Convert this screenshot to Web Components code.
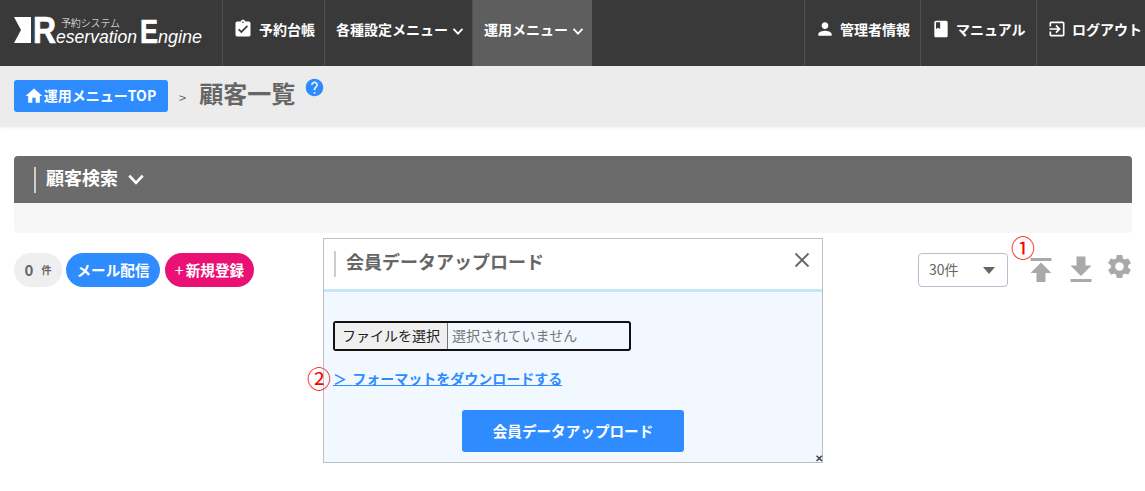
<!DOCTYPE html>
<html lang="ja">
<head>
<meta charset="utf-8">
<title>顧客一覧</title>
<style>
  html, body { margin: 0; padding: 0; background: #fff; }
  body { font-family: "Noto Sans CJK JP", "Noto Sans", sans-serif; color: #555; position: relative; height: 491px; overflow: hidden; }
</style>
</head>
<body>
<re-header>
  <re-nav-item icon="task" style="--w:102px;--gap:6px">予約台帳</re-nav-item>
  <re-nav-item caret style="--w:148px">各種設定メニュー</re-nav-item>
  <re-nav-item caret active style="--w:120px">運用メニュー</re-nav-item>
  <re-nav-item slot="right" icon="person" style="--w:116px">管理者情報</re-nav-item>
  <re-nav-item slot="right" icon="book" style="--w:116px;--gap:5px">マニュアル</re-nav-item>
  <re-nav-item slot="right" icon="logout" style="--w:109px">ログアウト</re-nav-item>
</re-header>
<re-subheader title-text="顧客一覧">運用メニューTOP</re-subheader>
<re-search-panel>顧客検索</re-search-panel>
<re-toolbar></re-toolbar>
<re-upload-modal></re-upload-modal>

<script>
const ICONS = {
  task: 'M19 3h-4.18C14.4 1.84 13.3 1 12 1c-1.3 0-2.4.84-2.82 2H5c-1.1 0-2 .9-2 2v14c0 1.1.9 2 2 2h14c1.1 0 2-.9 2-2V5c0-1.1-.9-2-2-2zm-7 0c.55 0 1 .45 1 1s-.45 1-1 1-1-.45-1-1 .45-1 1-1zm-2 14l-4-4 1.41-1.41L10 14.17l6.59-6.59L18 9l-8 8z',
  person: 'M12 12c2.21 0 4-1.79 4-4s-1.79-4-4-4-4 1.79-4 4 1.79 4 4 4zm0 2c-2.67 0-8 1.34-8 4v2h16v-2c0-2.66-5.33-4-8-4z',
  book: 'M18 2H6c-1.1 0-2 .9-2 2v16c0 1.1.9 2 2 2h12c1.1 0 2-.9 2-2V4c0-1.1-.9-2-2-2zM6 4h5v8l-2.5-1.5L6 12V4z',
  logout: 'M10.09 15.59L11.5 17l5-5-5-5-1.41 1.41L12.67 11H3v2h9.67l-2.58 2.59zM19 3H5c-1.11 0-2 .9-2 2v4h2V5h14v14H5v-4H3v4c0 1.1.89 2 2 2h14c1.1 0 2-.9 2-2V5c0-1.1-.9-2-2-2z',
  home: 'M10 20v-6h4v6h5v-8h3L12 3 2 12h3v8z',
  help: 'M12 2C6.48 2 2 6.48 2 12s4.48 10 10 10 10-4.48 10-10S17.52 2 12 2zm1 17h-2v-2h2v2zm2.07-7.75l-.9.92C13.45 12.9 13 13.5 13 15h-2v-.5c0-1.1.45-2.1 1.17-2.83l1.24-1.26c.37-.36.59-.86.59-1.41 0-1.1-.9-2-2-2s-2 .9-2 2H8c0-2.21 1.79-4 4-4s4 1.79 4 4c0 .88-.36 1.68-.93 2.25z',
  upload: 'M5 4v2h14V4H5zm0 10h4v6h6v-6h4l-7-7-7 7z',
  download: 'M19 9h-4V3H9v6H5l7 7 7-7zM5 18v2h14v-2H5z',
  gear: 'M19.14 12.94c.04-.3.06-.61.06-.94 0-.32-.02-.64-.07-.94l2.03-1.58c.18-.14.23-.41.12-.61l-1.92-3.32c-.12-.22-.37-.29-.59-.22l-2.39.96c-.5-.38-1.03-.7-1.62-.94l-.36-2.54c-.04-.24-.24-.41-.48-.41h-3.84c-.24 0-.43.17-.47.41l-.36 2.54c-.59.24-1.13.57-1.62.94l-2.39-.96c-.22-.08-.47 0-.59.22L2.74 8.87c-.12.21-.08.47.12.61l2.03 1.58c-.05.3-.09.63-.09.94s.02.64.07.94l-2.03 1.58c-.18.14-.23.41-.12.61l1.92 3.32c.12.22.37.29.59.22l2.39-.96c.5.38 1.03.7 1.62.94l.36 2.54c.05.24.24.41.48.41h3.84c.24 0 .44-.17.47-.41l.36-2.54c.59-.24 1.13-.56 1.62-.94l2.39.96c.22.08.47 0 .59-.22l1.92-3.32c.12-.22.07-.47-.12-.61l-2.01-1.58zM12 15.6c-1.98 0-3.6-1.62-3.6-3.6s1.62-3.6 3.6-3.6 3.6 1.62 3.6 3.6-1.62 3.6-3.6 3.6z'
};

class ReIcon extends HTMLElement {
  connectedCallback() {
    const size = this.getAttribute('size') || 24;
    const name = this.getAttribute('name');
    this.attachShadow({ mode: 'open' });
    this.shadowRoot.innerHTML = `
      <style>:host { display: inline-flex; flex: none; width: ${size}px; height: ${size}px; } svg { display: block; width: 100%; height: 100%; fill: currentColor; }</style>
      <svg viewBox="0 0 24 24"><path d="${ICONS[name]}"/></svg>`;
  }
}
customElements.define('re-icon', ReIcon);

class ReChevron extends HTMLElement {
  constructor() {
    super();
    this.attachShadow({ mode: 'open' });
    this.shadowRoot.innerHTML = `
      <style>:host { display: inline-flex; flex: none; width: 1em; height: .7em; } svg { display: block; width: 100%; height: 100%; }</style>
      <svg viewBox="0 0 20 14"><path d="M2.5 3l7.5 8 7.5-8" fill="none" stroke="currentColor" stroke-width="3"/></svg>`;
  }
}
customElements.define('re-chevron', ReChevron);

class ReLogo extends HTMLElement {
  constructor() {
    super();
    this.attachShadow({ mode: 'open' });
    this.shadowRoot.innerHTML = `
      <style>
        :host { display: block; flex: none; width: 222px; height: 66px; }
        svg { display: block; }
        text { fill: #fff; }
        .big { stroke: #fff; stroke-width: .7; }
      </style>
      <svg width="222" height="66" viewBox="0 0 222 66">
        <path d="M14 17h17v26H14l7-13z" fill="#fff"/>
        <text class="big" x="33" y="43" font-family="Liberation Sans" font-weight="700" font-size="36" textLength="23" lengthAdjust="spacingAndGlyphs">R</text>
        <text x="61" y="27" font-family="Noto Sans CJK JP" font-weight="300" font-size="10" textLength="59" lengthAdjust="spacing">予約システム</text>
        <text x="56" y="43" font-family="Liberation Sans" font-style="italic" font-size="19" textLength="81" lengthAdjust="spacingAndGlyphs">eservation</text>
        <text class="big" x="140" y="43" font-family="Liberation Sans" font-weight="700" font-size="34" textLength="18" lengthAdjust="spacingAndGlyphs">E</text>
        <text x="158" y="43" font-family="Liberation Sans" font-style="italic" font-size="19" textLength="44" lengthAdjust="spacingAndGlyphs">ngine</text>
      </svg>`;
  }
}
customElements.define('re-logo', ReLogo);

class ReHeader extends HTMLElement {
  constructor() {
    super();
    this.attachShadow({ mode: 'open' });
    this.shadowRoot.innerHTML = `
      <style>
        :host { display: flex; height: 66px; background: #393939; color: #fff; }
        .right { display: flex; margin-left: auto; }
      </style>
      <re-logo></re-logo>
      <slot></slot>
      <div class="right"><slot name="right"></slot></div>`;
  }
}
customElements.define('re-header', ReHeader);

class ReNavItem extends HTMLElement {
  connectedCallback() {
    const icon = this.getAttribute('icon');
    this.attachShadow({ mode: 'open' });
    this.shadowRoot.innerHTML = `
      <style>
        :host {
          display: flex; align-items: center; box-sizing: border-box; flex: none;
          width: var(--w); height: 66px; padding: 0 0 9px 11px; gap: 4px;
          border-left: 1px solid #505050;
          font-size: 14px; font-weight: 700; color: #fff; white-space: nowrap;
        }
        :host([active]) { background: #5e5e5e; }
        :host([icon]) { gap: var(--gap, 5px); }
        re-icon { margin-left: -1px; margin-top: 1px; }
        re-chevron { font-size: 12px; margin-top: 5px; }
      </style>
      ${icon ? `<re-icon name="${icon}" size="20"></re-icon>` : ''}
      <slot></slot>
      ${this.hasAttribute('caret') ? '<re-chevron></re-chevron>' : ''}`;
  }
}
customElements.define('re-nav-item', ReNavItem);

class ReSubheader extends HTMLElement {
  connectedCallback() {
    this.attachShadow({ mode: 'open' });
    this.shadowRoot.innerHTML = `
      <style>
        :host { display: flex; align-items: flex-start; box-sizing: border-box; height: 61px; padding: 14px 14px 0; background: #ececec; box-shadow: 0 1px 2px rgba(0,0,0,.05); }
        .top { display: flex; align-items: center; justify-content: center; box-sizing: border-box; width: 154px; height: 32px; padding-bottom: 2px; border-radius: 3px; background: #2e8cff; color: #fff; font-size: 14px; font-weight: 700; white-space: nowrap; }
        .top re-icon { color: #fff; margin: 2px 0 0 -2px; }
        .sep { margin: 9px 13px 0 11px; font-size: 13px; line-height: 18px; color: #666; }
        h1 { margin: 0; font-size: 24px; line-height: 26px; font-weight: 700; color: #666; }
        .help { color: #2e8cff; margin: -3px 0 0 9px; }
      </style>
      <div class="top"><re-icon name="home" size="20"></re-icon><slot></slot></div>
      <span class="sep">&gt;</span>
      <h1>${this.getAttribute('title-text')}</h1>
      <re-icon class="help" name="help" size="21"></re-icon>`;
  }
}
customElements.define('re-subheader', ReSubheader);

class ReSearchPanel extends HTMLElement {
  constructor() {
    super();
    this.attachShadow({ mode: 'open' });
    this.shadowRoot.innerHTML = `
      <style>
        :host { display: block; margin: 29px 13px 0 14px; border-radius: 4px; background: #f7f7f7; height: 77px; overflow: hidden; }
        .bar { display: flex; align-items: center; box-sizing: border-box; height: 47px; padding-left: 20px; gap: 9px; background: #6b6b6b; color: #fff; font-size: 18px; font-weight: 700; }
        .rule { width: 2px; height: 26px; background: #ccc; margin-right: 1px; }
        .label { margin-bottom: 6px; }
        re-chevron { font-size: 18px; }
      </style>
      <div class="bar"><span class="rule"></span><span class="label"><slot></slot></span><re-chevron></re-chevron></div>`;
  }
}
customElements.define('re-search-panel', ReSearchPanel);

class ReToolbar extends HTMLElement {
  constructor() {
    super();
    this.attachShadow({ mode: 'open' });
    this.shadowRoot.innerHTML = `
      <style>
        :host { display: flex; align-items: center; height: 34px; margin: 20px 11px 0 14px; position: relative; }
        .pill { display: flex; align-items: center; justify-content: center; box-sizing: border-box; height: 34px; padding-bottom: 2px; border-radius: 17px; font-size: 14.6px; font-weight: 700; color: #fff; white-space: nowrap; }
        .count { width: 48px; background: #efefef; color: #666; margin-right: 4px; gap: 8px; font-size: 15px; }
        .count small { font-size: 10px; }
        .mail { width: 94px; background: #2e8cff; margin-right: 5px; }
        .new { width: 89px; background: #e91173; }
        .new span { margin-right: 2px; font-weight: 400; font-size: 16px; }
        .right { display: flex; align-items: center; margin-left: auto; }
        .select { display: flex; align-items: center; justify-content: space-between; box-sizing: border-box; width: 90px; height: 34px; padding: 0 10px 2px; margin-right: 15px; border: 1px solid #bcbcd0; border-radius: 4px; background: #fff; font-size: 14px; color: #666; }
        .select i { width: 0; height: 0; border: 6px solid transparent; border-top: 7px solid #666; border-bottom: 0; margin: 2px 2px 0 0; }
        re-icon { color: #a9a9a9; }
        .up { margin-right: 4px; }
        .down { margin-right: 6px; margin-top: -1px; }
        .gear { margin-top: -7px; }
        .mark { position: absolute; left: 997px; top: -18px; color: #f00; font-size: 24px; line-height: 24px; }
      </style>
      <div class="pill count"><span>0</span><small>件</small></div>
      <div class="pill mail">メール配信</div>
      <div class="pill new"><span>+</span>新規登録</div>
      <div class="right">
        <div class="select">30件<i></i></div>
        <re-icon class="up" name="upload" size="36"></re-icon>
        <re-icon class="down" name="download" size="36"></re-icon>
        <re-icon class="gear" name="gear" size="29"></re-icon>
      </div>
      <span class="mark">①</span>`;
  }
}
customElements.define('re-toolbar', ReToolbar);

class ReUploadModal extends HTMLElement {
  constructor() {
    super();
    this.attachShadow({ mode: 'open' });
    this.shadowRoot.innerHTML = `
      <style>
        :host { position: absolute; left: 323px; top: 238px; box-sizing: border-box; width: 500px; height: 225px; display: flex; flex-direction: column; border: 1px solid #c0c0c0; background: #f1f8ff; }
        header { display: flex; align-items: center; box-sizing: border-box; height: 53px; padding: 0 11px 0 10px; background: #fff; border-bottom: 3px solid #c6e6f6; font-size: 18px; font-weight: 700; color: #666; }
        .rule { width: 2px; height: 26px; background: #ccc; margin-right: 10px; }
        .title { margin-bottom: 6px; }
        .close { margin: 0 0 8px auto; color: #666; display: flex; }
        .body { display: flex; flex-direction: column; align-items: flex-start; padding: 29px 9px 0; }
        .file { display: flex; align-items: stretch; box-sizing: border-box; width: 298px; height: 30px; border: 2px solid #111; border-radius: 3px; font-size: 14px; line-height: 24px; color: #777; background: #f1f8ff; }
        .file b { font-weight: 400; color: #222; background: #efefef; padding: 0 7px; border-right: 1px solid #777; margin-right: 4px; }
        a { position: relative; margin-top: 16px; font-size: 14px; line-height: 22px; font-weight: 700; color: #2e8cff; text-decoration: underline; white-space: nowrap; }
        .gt { letter-spacing: 1px; }
        .submit { align-self: center; display: flex; align-items: center; justify-content: center; box-sizing: border-box; width: 222px; height: 42px; padding-bottom: 2px; margin-top: 21px; border-radius: 3px; background: #2e8cff; color: #fff; font-size: 14.6px; font-weight: 700; }
        .mark { position: absolute; left: -26px; top: -1px; color: #f00; font-size: 24px; line-height: 24px; font-weight: 400; display: inline-block; }
        .resize { position: absolute; right: -1px; bottom: -1px; font-size: 10px; line-height: 9px; font-weight: 700; color: #444; font-family: "Liberation Sans", sans-serif; }
      </style>
      <header>
        <span class="rule"></span><span class="title">会員データアップロード</span>
        <span class="close"><svg width="18" height="18" viewBox="0 0 18 18"><path d="M2.5 2.5l13 13M15.5 2.5l-13 13" stroke="currentColor" stroke-width="1.8" fill="none"/></svg></span>
      </header>
      <div class="body">
        <div class="file"><b>ファイルを選択</b><span>選択されていません</span></div>
        <a href="#"><span class="mark">②</span><span class="gt">＞ </span>フォーマットをダウンロードする</a>
        <div class="submit">会員データアップロード</div>
      </div>
      <span class="resize">✕</span>`;
  }
}
customElements.define('re-upload-modal', ReUploadModal);
</script>
</body>
</html>
